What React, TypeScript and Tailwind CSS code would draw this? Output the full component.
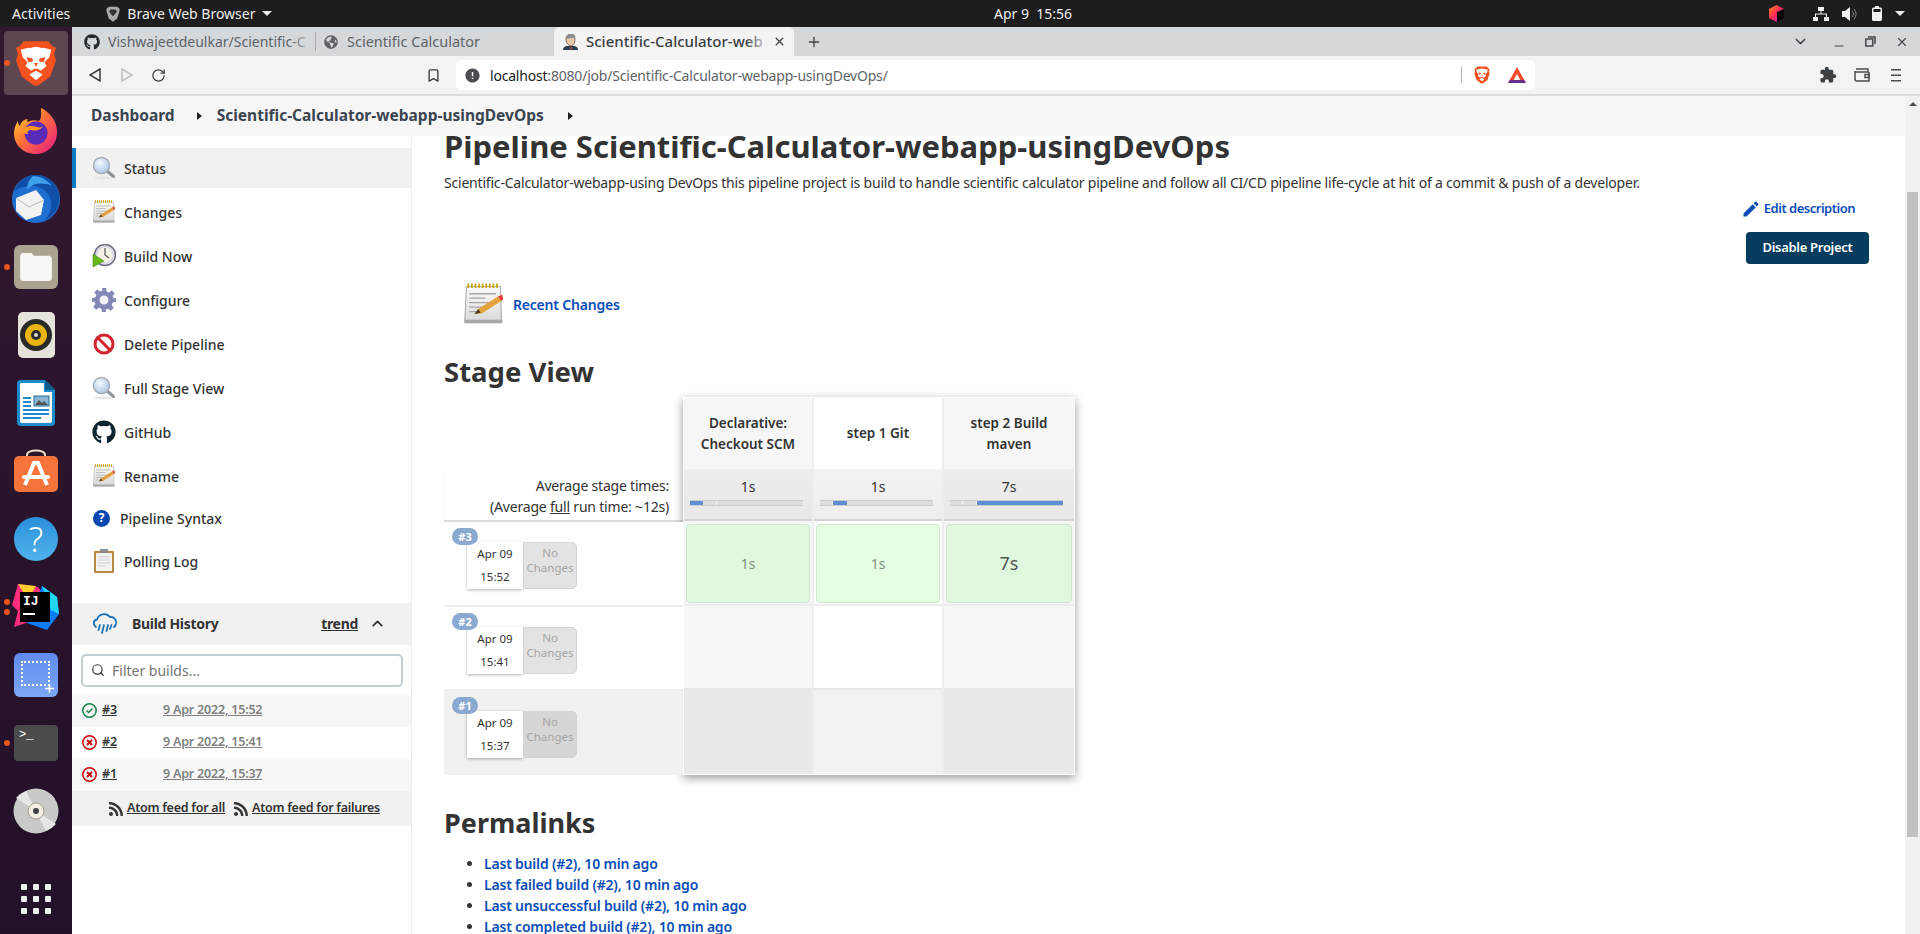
import { Bookmark, ChevronDown, ChevronUp, RotateCw, Search, X, Plus, Minus } from 'lucide-react';
import { FaGithub, FaGlobeAmericas, FaRss } from 'react-icons/fa';
import { MdEdit, MdError, MdExtension } from 'react-icons/md';

const font = { fontFamily: '"Noto Sans", sans-serif' };

function BraveLion({ size = 52 }: { size?: number }) {
  return (
    <svg width={size} height={size * 1.1} viewBox="0 0 44 48">
      <path d="M9 1h26l4 5 4 2-2 7 2 6-6 17-12 9-3 1-3-1-12-9L1 21l2-6-2-7 4-2z" fill="#f4511e" />
      <path d="M22 7c-3 0-5 2-8 1L6 10l2 8 5 5-2 4 6 5 3-2h4l3 2 6-5-2-4 5-5 2-8-8-2c-3 1-5-1-8-1z" fill="#fff" />
      <path d="M12 18l6 1 1 3-5 1zM32 18l-6 1-1 3 5 1z" fill="#f4511e" />
      <path d="M20 24h4l-2 4z" fill="#f4511e" />
      <path d="M15 36l7-4 7 4-7 6z" fill="#fff" />
    </svg>
  );
}

function Firefox() {
  return (
    <svg width="46" height="48" viewBox="0 0 46 48">
      <defs>
        <linearGradient id="ffa" x1="0" y1="0" x2="1" y2="1">
          <stop offset="0" stopColor="#ffe226" />
          <stop offset="0.45" stopColor="#ff7139" />
          <stop offset="1" stopColor="#e31587" />
        </linearGradient>
      </defs>
      <path d="M23 47C10 47 1 38 1 26c0-5 2-9 4-12 0 3 1 4 2 5 1-4 4-7 8-7-1 1-1 2 0 3 3-2 7-2 11-1 3-3 2-8 2-13 7 3 15 11 16 22 1 14-9 24-21 24z" fill="url(#ffa)" />
      <circle cx="23" cy="26" r="11.5" fill="#5b2ab8" />
      <path d="M9 24c3-5 9-6 15-4 3 1 5 0 6-1-3 5-8 5-12 4-3 0-4 2-3 4-4 0-5-1-6-3z" fill="#ff9a1f" />
    </svg>
  );
}

function Thunderbird() {
  return (
    <svg width="50" height="50" viewBox="0 0 50 50">
      <circle cx="25" cy="25" r="24" fill="#1f6fd0" />
      <path d="M3 18C6 8 15 1 25 1c12 0 23 9 23 23 0 10-6 19-14 22 5-6 8-13 5-22-3-8-10-12-18-12-8 0-15 2-18 6z" fill="#0f4fa8" />
      <path d="M5 24l20-8 8 10-3 15-15 5-10-9z" fill="#f2f2f2" />
      <path d="M5 24l13 9 15-7" fill="none" stroke="#b9b9c6" strokeWidth="1" />
      <path d="M22 2c8 0 14 4 19 10-6-3-13-3-19-1-2 1-5 3-6 5 0-6 2-10 6-14z" fill="#3ea2ec" />
    </svg>
  );
}

function Files() {
  return (
    <div className="w-[44px] h-[44px] rounded-[6px] bg-[#a9a38f] flex items-center justify-center">
      <svg width="32" height="28" viewBox="0 0 34 30">
        <path d="M3 0h9l3 3h16c1.500 0 3 1.500 3 3v21c0 1.500-1.500 3-3 3H3c-1.500 0-3-1.500-3-3V3c0-1.500 1.500-3 3-3z" fill="#f8f6f2" />
      </svg>
    </div>
  );
}

function Rhythmbox() {
  return (
    <div className="w-[37px] h-[46px] rounded-[5px] bg-[#e6e3da] flex items-center justify-center">
      <svg width="32" height="32" viewBox="0 0 32 32">
        <circle cx="16" cy="16" r="16" fill="#2a2a28" />
        <circle cx="16" cy="16" r="11" fill="#e9b512" />
        <circle cx="16" cy="16" r="5" fill="#2a2a28" />
        <circle cx="16" cy="16" r="2" fill="#d9d9d9" />
      </svg>
    </div>
  );
}

function Writer() {
  return (
    <svg width="38" height="46" viewBox="0 0 38 46">
      <path d="M4 0h24l10 10v32a4 4 0 0 1-4 4H4a4 4 0 0 1-4-4V4a4 4 0 0 1 4-4z" fill="#1e8bcd" />
      <path d="M4 3h23v9h8v29a2 2 0 0 1-2 2H5a2 2 0 0 1-2-2V4z" fill="#fff" />
      <path d="M28 0l10 10H28z" fill="#0e5f8e" />
      <path d="M6 17h8v2H6zM6 21h8v2H6zM6 25h8v2H6zM6 29h26v2H6zM6 33h26v2H6zM6 37h18v2H6z" fill="#1e8bcd" />
      <rect x="17" y="16" width="15" height="10" fill="#8ab7d4" stroke="#1e6f9e" />
      <path d="M18 25l4-5 3 3 2-2 4 4z" fill="#555" />
    </svg>
  );
}

function Store() {
  return (
    <svg width="46" height="44" viewBox="0 0 46 44">
      <path d="M14 10V6c0-6 18-6 18 0v4" fill="none" stroke="#eee3d0" strokeWidth="2" />
      <rect x="1" y="7" width="44" height="36" rx="5" fill="#f4743b" />
      <path d="M12 36l9-22h4l9 22" fill="none" stroke="#fff" strokeWidth="4" />
      <rect x="9" y="26" width="28" height="4" rx="2" fill="#fff" />
    </svg>
  );
}

function Help() {
  return (
    <div className="w-[44px] h-[44px] rounded-full bg-gradient-to-b from-[#2a8fdb] to-[#4fb3ec] flex items-center justify-center text-white text-[34px] font-light leading-none" style={font}>
      ?
    </div>
  );
}

function Idea() {
  return (
    <div className="relative w-[48px] h-[48px]">
      <svg width="48" height="48" viewBox="0 0 48 48" className="absolute left-0 top-0">
        <path d="M6 1l20 3 8 10-20 26-12 4 4-16-6-6z" fill="#fc2d7c" />
        <path d="M6 1l18 2-8 14z" fill="#ffcb2d" />
        <path d="M30 3l15 11 2 17-12 16-20-7z" fill="#087cfa" />
        <path d="M30 3l15 11 2 17-8-4z" fill="#21d7f7" />
      </svg>
      <div className="absolute left-[8px] top-[9px] w-[30px] h-[30px] bg-black text-white text-[13px] font-bold leading-[18px] pl-[3px] pt-[1px]" style={{ fontFamily: '"Liberation Mono", monospace' }}>
        IJ
        <div className="w-[12px] h-[2px] bg-white mt-[2px]" />
      </div>
    </div>
  );
}

function Screenshot() {
  return (
    <div className="relative w-[44px] h-[44px] rounded-[6px] bg-gradient-to-b from-[#5f8cf0] to-[#7ea6f8]">
      <div className="absolute left-[7px] top-[8px] w-[29px] h-[25px] border-2 border-dotted border-white" />
      <Plus className="absolute right-[2px] bottom-[2px] text-white" size={13} strokeWidth={3} />
    </div>
  );
}

function Terminal() {
  return (
    <div className="w-[44px] h-[36px] rounded-[4px] bg-[#4b4b4b] text-white text-[12px] leading-[14px] pl-[5px] pt-[3px]" style={{ fontFamily: '"Liberation Mono", monospace' }}>
      {'>_'}
    </div>
  );
}

function Disc() {
  return (
    <svg width="46" height="46" viewBox="0 0 46 46">
      <circle cx="23" cy="23" r="22.500" fill="#c9c9c9" />
      <path d="M23 23L3 10a23 23 0 0 1 10-7zM23 23l20 13a23 23 0 0 1-10 7z" fill="#e6e6e6" />
      <circle cx="23" cy="23" r="8" fill="#f3efe5" stroke="#a89f8d" />
      <circle cx="23" cy="23" r="3" fill="#444" />
    </svg>
  );
}

function Dock() {
  const slot = 'h-[68px] flex items-center justify-center relative';
  const dot = 'absolute left-[4px] w-[6px] h-[6px] rounded-full bg-[#e95420]';
  return (
    <div className="w-[72px] shrink-0 bg-gradient-to-b from-[#33182f] to-[#221028] flex flex-col pt-[2px]">
      <div className={slot}>
        <div className="w-[64px] h-[64px] rounded-[4px] bg-[#5d4650] flex items-center justify-center">
          <BraveLion size={42} />
        </div>
        <span className={`${dot} top-[31px]`} />
      </div>
      <div className={slot}><Firefox /></div>
      <div className={slot}><Thunderbird /></div>
      <div className={slot}><Files /><span className={`${dot} top-[31px]`} /></div>
      <div className={slot}><Rhythmbox /></div>
      <div className={slot}><Writer /></div>
      <div className={slot}><Store /></div>
      <div className={slot}><Help /></div>
      <div className={slot}>
        <Idea />
        <span className={`${dot} top-[26px]`} />
        <span className={`${dot} top-[36px]`} />
      </div>
      <div className={slot}><Screenshot /></div>
      <div className={slot}><Terminal /><span className={`${dot} top-[31px]`} /></div>
      <div className={slot}><Disc /></div>
      <div className="mt-[39px] grid grid-cols-3 gap-x-[6px] gap-y-[6px] w-[30px] mx-auto">
        {Array.from({ length: 9 }).map((_, i) => (
          <span key={i} className="w-[6px] h-[6px] rounded-[1px] bg-[#eeeeee]" />
        ))}
      </div>
    </div>
  );
}

function TopBar() {
  return (
    <div className="h-[27px] bg-[#1d1d1d] flex items-center text-[#ececec] text-[14px] relative" style={font}>
      <span className="ml-[12px]">Activities</span>
      <svg width="14" height="16" viewBox="0 0 44 48" className="ml-[36px]">
        <path d="M9 1h26l8 7-2 13-6 17-13 10-13-10L3 21 1 8z" fill="#aaa" />
        <path d="M13 10h18l3 7-6 8-6 6-6-6-6-8z" fill="#333" />
      </svg>
      <span className="ml-[7px]">Brave Web Browser</span>
      <span className="ml-[6px] w-0 h-0 border-x-[5px] border-x-transparent border-t-[5px] border-t-[#ececec]" />
      <span className="absolute left-[988px] w-[90px] text-center whitespace-pre">Apr 9  15:56</span>
      <div className="ml-auto flex items-center mr-[15px]">
        <svg width="15" height="17" viewBox="0 0 15 17">
          <defs>
            <linearGradient id="tbx" x1="0" y1="0" x2="1" y2="1">
              <stop offset="0" stopColor="#ff8a1e" />
              <stop offset="0.5" stopColor="#fe2857" />
              <stop offset="1" stopColor="#8a2be2" />
            </linearGradient>
          </defs>
          <path d="M7.500 0L15 4v9l-7.500 4L0 13V4z" fill="url(#tbx)" />
          <path d="M8 7l7-3v9l-7 4z" fill="#000" />
        </svg>
        <svg width="16" height="14" viewBox="0 0 16 14" className="ml-[29px]" fill="#f0f0f0">
          <rect x="5" y="0" width="6" height="4" />
          <rect x="0" y="10" width="5" height="4" />
          <rect x="11" y="10" width="5" height="4" />
          <path d="M7.500 4h1v2.500H14V10h-1V7.500H3V10H2V6.500h5.500z" />
        </svg>
        <svg width="15" height="14" viewBox="0 0 15 14" className="ml-[13px]">
          <path d="M0 4h3l5-4v14l-5-4H0z" fill="#f0f0f0" />
          <path d="M10 4a4 4 0 0 1 0 6M12 2a7 7 0 0 1 0 10" stroke="#888" fill="none" />
        </svg>
        <svg width="10" height="15" viewBox="0 0 10 15" className="ml-[15px]">
          <path d="M3 0h4v1.500h1.500c.8 0 1.500.7 1.500 1.500v10.500c0 .8-.7 1.500-1.500 1.500h-7C.7 15 0 14.300 0 13.500V3c0-.8.7-1.500 1.500-1.500H3z" fill="#f0f0f0" />
          <rect x="1.500" y="3" width="7" height="3" fill="#1d1d1d" />
        </svg>
        <span className="ml-[13px] w-0 h-0 border-x-[5px] border-x-transparent border-t-[5px] border-t-[#ececec]" />
      </div>
    </div>
  );
}

function JenkinsHead() {
  return (
    <svg width="15" height="16" viewBox="0 0 15 16">
      <path d="M0 16c0-3 2-4 4-4h7c2 0 4 1 4 4z" fill="#2c3e50" />
      <path d="M3 5c0-3 2-5 5-5s4 2 4 5-1 7-4 7-5-4-5-7z" fill="#e8c9a8" stroke="#4a3b30" strokeWidth="0.7" />
      <path d="M3 5c0-3 2-5 5-5s4 2 4 4C9 4 6 4 3 5z" fill="#8a8f94" />
      <path d="M6 14l2 1 2-1-2-1z" fill="#c0392b" />
    </svg>
  );
}

function TabStrip() {
  return (
    <div className="h-[29px] bg-[#d5d8db] flex items-stretch text-[14px]" style={font}>
      <div className="w-[243px] pl-[12px] flex items-center gap-[8px] text-[#5f6368] overflow-hidden relative">
        <FaGithub size={16} className="text-[#24292e] shrink-0" />
        <span className="whitespace-nowrap">Vishwajeetdeulkar/Scientific-C</span>
        <span className="absolute right-0 top-0 bottom-0 w-[24px] bg-gradient-to-r from-transparent to-[#d5d8db]" />
      </div>
      <div className="w-px my-[5px] bg-[#a9adb1]" />
      <div className="w-[238px] pl-[8px] flex items-center gap-[9px] text-[#5f6368]">
        <FaGlobeAmericas size={14} className="text-[#5f6368] shrink-0" />
        <span className="whitespace-nowrap text-[14.500px]">Scientific Calculator</span>
      </div>
      <div className="w-[240px] pl-[9px] rounded-t-[6px] bg-[#f3f3f3] flex items-center gap-[8px] text-[#3c4043] relative font-medium overflow-hidden text-[15px]">
        <span className="shrink-0"><JenkinsHead /></span>
        <span className="whitespace-nowrap">Scientific-Calculator-web</span>
        <span className="absolute right-[24px] top-0 bottom-0 w-[24px] bg-gradient-to-r from-transparent to-[#f3f3f3]" />
        <span className="absolute right-0 top-0 bottom-0 w-[24px] bg-[#f3f3f3] flex items-center">
          <X size={13} strokeWidth={2.500} className="text-[#45494d] ml-[3px]" />
        </span>
      </div>
      <div className="ml-[12px] flex items-center">
        <Plus size={16} strokeWidth={2} className="text-[#3c4043]" />
      </div>
      <div className="ml-auto flex items-center text-[#45494d]">
        <ChevronDown size={17} strokeWidth={2} />
        <Minus size={14} strokeWidth={2} className="ml-[23px] mt-[8px]" />
        <svg width="11" height="11" viewBox="0 0 11 11" className="ml-[19px]" fill="none" stroke="#45494d" strokeWidth="1.500">
          <rect x="0.800" y="3" width="7" height="7" />
          <path d="M3 1h7v7" />
        </svg>
        <X size={14} strokeWidth={2} className="ml-[19px] mr-[11px]" />
      </div>
    </div>
  );
}

function Toolbar() {
  return (
    <div className="h-[40px] bg-[#f3f3f3] border-b-2 border-[#dcdcdc] flex items-center relative" style={font}>
      <svg width="12" height="14" viewBox="0 0 12 14" className="ml-[17px]" fill="none" stroke="#3c4043" strokeWidth="1.500">
        <path d="M11 1L1 7l10 6z" />
      </svg>
      <svg width="12" height="14" viewBox="0 0 12 14" className="ml-[20px]" fill="none" stroke="#bdbdbd" strokeWidth="1.500">
        <path d="M1 1l10 6-10 6z" />
      </svg>
      <RotateCw size={15} strokeWidth={2} className="ml-[18px] text-[#3c4043]" />
      <Bookmark size={15} strokeWidth={2.200} className="ml-[260px] text-[#3c4043]" />
      <div className="ml-[15px] w-[1079px] h-[30px] bg-white rounded-[5px] flex items-center relative">
        <MdError size={17} className="ml-[8px] text-[#4a4d51]" />
        <span className="ml-[9px] text-[14px] tracking-[-0.2px] text-[#5f6368] whitespace-nowrap">
          <span className="text-[#202124]">localhost</span>:8080/job/Scientific-Calculator-webapp-usingDevOps/
        </span>
        <div className="ml-auto w-px h-[16px] bg-[#a9adb1]" />
        <div className="ml-[12px] flex items-center justify-center"><BraveLion size={16} /></div>
        <svg width="18" height="16" viewBox="0 0 18 16" className="ml-[18px] mr-[9px]">
          <path d="M9 0l9 16H0z" fill="#f3492d" />
          <path d="M4 16l5-9 5 9z" fill="#fff" />
          <path d="M0 16h18l-2-3H2z" fill="#662d91" />
        </svg>
      </div>
      <MdExtension size={18} className="ml-[284px] text-[#3c4043]" />
      <svg width="16" height="14" viewBox="0 0 16 14" className="ml-[17px]" fill="none" stroke="#4a4d51" strokeWidth="1.500">
        <path d="M2 1h12v3H2a1 1 0 0 1-1-1v8a2 2 0 0 0 2 2h12V4" />
        <rect x="11" y="6.500" width="4" height="3" />
      </svg>
      <svg width="10" height="13" viewBox="0 0 10 13" className="ml-[21px]" fill="#4a4d51">
        <rect width="10" height="1.500" />
        <rect y="5.500" width="10" height="1.500" />
        <rect y="11" width="10" height="1.500" />
      </svg>
    </div>
  );
}

function Lens({ size = 24 }: { size?: number }) {
  return (
    <svg width={size} height={size} viewBox="0 0 24 24">
      <defs>
        <radialGradient id="lens" cx="0.400" cy="0.350" r="0.700">
          <stop offset="0" stopColor="#f4f8fd" />
          <stop offset="1" stopColor="#a9c6e6" />
        </radialGradient>
      </defs>
      <ellipse cx="11" cy="22" rx="9" ry="1.500" fill="#e5e5e5" />
      <path d="M14.500 14.500l7 6" stroke="#8f9499" strokeWidth="3" strokeLinecap="round" />
      <circle cx="9.500" cy="9.500" r="8" fill="url(#lens)" stroke="#a8adb3" strokeWidth="1.500" />
    </svg>
  );
}

function Notepad({ size = 24 }: { size?: number }) {
  return (
    <svg width={size} height={size} viewBox="0 0 24 24">
      <defs>
        <linearGradient id="pad" x1="0" y1="0" x2="0" y2="1">
          <stop offset="0" stopColor="#fbfbfb" />
          <stop offset="1" stopColor="#d9d9d9" />
        </linearGradient>
      </defs>
      <path d="M2.500 2h19l.5 20H1.500z" fill="url(#pad)" stroke="#9a9a9a" strokeWidth="0.500" />
      <rect x="1.500" y="20.500" width="21" height="2" fill="#a8a8a8" />
      <path d="M3 1.500h18" stroke="#c9a80f" strokeWidth="2.500" strokeDasharray="1 1" />
      <path d="M4 6h15M4 8.500h9M4 11h12M4 13.500h7M4 16h8" stroke="#a8a8a8" strokeWidth="0.700" />
      <path d="M7 17.500l2-3 11-7 2 2.500-11 7z" fill="#e3a23c" />
      <path d="M20 7.500l2.500-1 .5 2.500-1 1z" fill="#e23b3b" />
      <path d="M7 17.500l2-3 1.500 2z" fill="#4a3b20" />
    </svg>
  );
}

function ClockPlay() {
  return (
    <svg width="24" height="24" viewBox="0 0 24 24">
      <circle cx="13" cy="11" r="10.500" fill="#dbdbe6" stroke="#6d6f86" strokeWidth="1.500" />
      <circle cx="13" cy="11" r="7.500" fill="#f7f3e4" />
      <path d="M13 4v7l4 3" stroke="#555" strokeWidth="1.200" fill="none" />
      <path d="M1 10l0 13 11-6z" fill="#69b81b" stroke="#3f7f0c" strokeWidth="0.500" />
    </svg>
  );
}

function GearIcon() {
  return (
    <svg width="24" height="24" viewBox="0 0 24 24">
      <path d="M10 0h4l.6 3.400 2.400 1 2.900-2 2.800 2.800-2 2.900 1 2.400L24 10v4l-3.300.6-1 2.400 2 2.900-2.800 2.800-2.900-2-2.400 1L14 24h-4l-.6-3.300-2.400-1-2.900 2-2.800-2.800 2-2.900-1-2.400L0 14v-4l3.300-.5 1-2.400-2-2.900 2.800-2.800 2.900 2 2.400-1z" fill="#8388b8" />
      <circle cx="12" cy="12" r="4.500" fill="#f3f3f7" />
    </svg>
  );
}

function NoEntry() {
  return (
    <svg width="22" height="22" viewBox="0 0 22 22">
      <circle cx="11" cy="11" r="9" fill="#fff" stroke="#d7232d" strokeWidth="3" />
      <path d="M4.500 4.500l13 13" stroke="#d7232d" strokeWidth="3" />
    </svg>
  );
}

function Clipboard() {
  return (
    <svg width="22" height="24" viewBox="0 0 22 24">
      <rect x="1" y="2" width="20" height="22" rx="1" fill="#b88a45" />
      <rect x="3" y="4" width="16" height="18" fill="#f2f2f2" />
      <rect x="7" y="0" width="8" height="4" rx="1" fill="#8b8b8b" />
      <path d="M5 8h12M5 11h12M5 14h12M5 17h8" stroke="#d0d0d0" />
    </svg>
  );
}

function RainCloud() {
  return (
    <svg width="26" height="24" viewBox="0 0 26 24" fill="none" stroke="#1a6fb5" strokeWidth="1.800" strokeLinecap="round">
      <path d="M4 15C1 13 1 8 5 7.500 6.500 2 14 0 18 5c4-.5 7 3 6 7-.3 1.200-1 2.200-2 3" />
      <path d="M8 13l-1.500 5M12 13l-2 8M16 13l-1.500 6M19.500 13l-1.500 4" />
    </svg>
  );
}

function MenuRow({ icon, label, active, className }: { icon: React.ReactNode; label: string; active?: boolean; className?: string }) {
  return (
    <div className={`h-[40px] flex items-center text-[14px] font-medium text-[#333] ${active ? 'bg-[#f1f1f1] border-l-4 border-[#0b7cc4] pl-[16px]' : 'pl-[20px]'} ${className ?? ''}`}>
      <span className="w-[24px] flex justify-center shrink-0">{icon}</span>
      <span className="ml-[8px]">{label}</span>
    </div>
  );
}

function BuildRow({ status, num, date, odd }: { status: 'ok' | 'fail'; num: string; date: string; odd?: boolean }) {
  return (
    <div className={`h-[32px] flex items-center pl-[10px] pb-[2px] text-[12.500px] tracking-[-0.2px] font-semibold ${odd ? 'bg-[#f7f7f7]' : 'bg-white'}`}>
      {status === 'ok' ? (
        <svg width="15" height="15" viewBox="0 0 15 15" fill="none" strokeWidth="1.500">
          <circle cx="7.500" cy="7.500" r="6.700" stroke="#138347" />
          <path d="M4.500 7.500l2 2 4-4" stroke="#138347" />
        </svg>
      ) : (
        <svg width="15" height="15" viewBox="0 0 15 15" fill="none" strokeWidth="1.500">
          <circle cx="7.500" cy="7.500" r="6.700" stroke="#cc0003" />
          <path d="M5 5l5 5M10 5l-5 5" stroke="#cc0003" strokeWidth="2" />
        </svg>
      )}
      <span className="ml-[5px] w-[61px] underline text-[#333]">{num}</span>
      <span className="underline text-[#808080]">{date}</span>
    </div>
  );
}

function Sidebar() {
  return (
    <div className="w-[340px] shrink-0 border-r border-[#eeeeee] pt-[12px]">
      <div className="flex flex-col gap-[4px]">
        <MenuRow active icon={<Lens />} label="Status" />
        <MenuRow icon={<Notepad />} label="Changes" />
        <MenuRow icon={<ClockPlay />} label="Build Now" />
        <MenuRow icon={<GearIcon />} label="Configure" />
        <MenuRow icon={<NoEntry />} label="Delete Pipeline" />
        <MenuRow icon={<Lens />} label="Full Stage View" />
        <MenuRow icon={<FaGithub size={24} className="text-[#0d2430]" />} label="GitHub" />
        <MenuRow icon={<Notepad />} label="Rename" />
      </div>
      <div className="h-[40px] mt-[2px] flex items-center pl-[21px] text-[14px] font-medium text-[#333]">
        <span className="w-[17px] h-[17px] rounded-full bg-[#0b47b0] text-white text-[12px] font-bold flex items-center justify-center">?</span>
        <span className="ml-[10px]">Pipeline Syntax</span>
      </div>
      <div className="h-[40px] mt-[3px] flex items-center pl-[20px] text-[14px] font-medium text-[#333]">
        <span className="w-[24px] flex justify-center"><Clipboard /></span>
        <span className="ml-[8px]">Polling Log</span>
      </div>
      <div className="h-[42px] mt-[22px] pb-[1px] bg-[#f1f1f1] flex items-center pl-[20px] text-[14px] tracking-[-0.3px] font-bold text-[#333]">
        <RainCloud />
        <span className="ml-[14px]">Build History</span>
        <span className="ml-auto underline">trend</span>
        <ChevronUp size={17} strokeWidth={2.500} className="ml-[11px] mr-[25px]" />
      </div>
      <div className="h-[50px] flex items-center pl-[9px]">
        <div className="w-[322px] h-[33px] bg-white border-2 border-[#c3ced4] rounded-[5px] flex items-center pl-[8px] text-[14px] text-[#757575]">
          <Search size={14} className="text-[#333]" />
          <span className="ml-[7px]">Filter builds...</span>
        </div>
      </div>
      <BuildRow odd status="ok" num="#3" date="9 Apr 2022, 15:52" />
      <BuildRow status="fail" num="#2" date="9 Apr 2022, 15:41" />
      <BuildRow odd status="fail" num="#1" date="9 Apr 2022, 15:37" />
      <div className="h-[35px] bg-[#f1f1f1] flex items-center justify-center gap-[8px] pl-[5px] text-[12.500px] tracking-[-0.25px] font-semibold text-[#333]">
        <span className="flex items-center gap-[3px]"><FaRss size={16} /><span className="underline">Atom feed for all</span></span>
        <span className="flex items-center gap-[3px]"><FaRss size={16} /><span className="underline">Atom feed for failures</span></span>
      </div>
    </div>
  );
}

type Stage = { name: string[]; avg: string; active: number; odd: boolean; value: string; big?: boolean; light?: boolean };

const stages: Stage[] = [
  { name: ['Declarative:', 'Checkout SCM'], avg: '1s', active: 0, odd: true, value: '1s' },
  { name: ['step 1 Git'], avg: '1s', active: 1, odd: false, value: '1s', light: true },
  { name: ['step 2 Build', 'maven'], avg: '7s', active: 2, odd: true, value: '7s', big: true },
];

const barSegments = ['w-[13px]', 'w-[14px]', 'flex-1'];

function StageColumn({ s, last }: { s: Stage; last?: boolean }) {
  return (
    <div className={`w-[130px] flex flex-col ${last ? '' : 'border-r-2 border-[#eeeeee]'}`}>
      <div className={`h-[71px] flex flex-col items-center justify-center text-[13.500px] font-semibold leading-[21px] text-[#333] ${s.odd ? 'bg-[#f6f6f6]' : 'bg-white'}`}>
        {s.name.map((n) => (
          <span key={n}>{n}</span>
        ))}
      </div>
      <div className={`h-[52px] pl-[6px] pt-[8px] flex flex-col items-center text-[14px] text-[#333] bg-gradient-to-b ${s.odd ? 'from-[#ededed] to-[#e8e8e8]' : 'from-[#f3f3f3] to-[#eeeeee]'} border-b-2 border-[#d4d4d4]`}>
        <span className="leading-[20px] pr-[6px]">{s.avg}</span>
        <div className="mt-[3px] w-[113px] h-[6px] self-start flex bg-[#dddddd] border-y border-[#cccccc]">
          {barSegments.map((w, i) => (
            <span key={w} className={`${w} h-full ${i === s.active ? 'bg-[#5c90d2]' : i < 2 ? 'border-r border-[#f2f2f2]' : ''}`} />
          ))}
        </div>
      </div>
      <div className={`h-[85px] px-[2px] pt-[3px] pb-[1px] border-b-2 border-[#eeeeee] ${s.odd ? 'bg-[#f6f6f6]' : 'bg-white'}`}>
        <div className={`h-full rounded-[4px] border border-[#cfe6cf] flex items-center justify-center ${s.light ? 'bg-[#e5ffe3]' : 'bg-[#dff8de]'} ${s.big ? 'text-[18px] text-[#555]' : 'text-[14px] text-[#7f917f]'}`}>
          {s.value}
        </div>
      </div>
      <div className={`h-[84px] border-b-2 border-[#e8e8e8] ${s.odd ? 'bg-[#f7f7f7]' : 'bg-white'}`} />
      <div className={`h-[84px] ${s.odd ? 'bg-[#e9e9e9]' : 'bg-[#f2f2f2]'}`} />
    </div>
  );
}

function BuildCell({ num, date, time, alt, last, tall }: { num: string; date: string; time: string; alt?: boolean; last?: boolean; tall?: boolean }) {
  return (
    <div className={`${tall ? 'h-[85px]' : 'h-[84px]'} relative pl-[23px] pt-[20px] ${alt ? 'bg-[#f1f1f1]' : 'bg-white'} ${last ? '' : 'border-b-2 border-[#eeeeee]'}`}>
      <span className="absolute left-[8px] top-[6px] w-[26px] h-[17px] rounded-full bg-[#8aa9d0] text-white text-[11px] font-bold text-center leading-[17px]">{num}</span>
      <div className="flex text-[11.500px]">
        <div className="w-[56px] h-[47px] bg-white shadow-[0_1px_3px_rgba(0,0,0,0.3)] flex flex-col items-center justify-between pt-[3px] pb-[4px] text-[#333]">
          <span>{date}</span>
          <span>{time}</span>
        </div>
        <div className={`w-[54px] h-[47px] rounded-r-[5px] ${alt ? 'bg-[#d6d6d6]' : 'bg-[#e3e3e3]'} border border-[#d4d4d4] flex flex-col items-center pt-[2px] leading-[15px] text-[#a5a5a5]`}>
          <span>No</span>
          <span>Changes</span>
        </div>
      </div>
    </div>
  );
}

function StageView() {
  return (
    <div className="flex items-start mt-[7px]">
      <div className="w-[239px] shrink-0 flex flex-col">
        <div className="h-[71px]" />
        <div className="h-[52px] pr-[14px] pt-[7px] text-right text-[14px] leading-[21px] text-[#333] tracking-[-0.2px] shadow-[0_2px_2px_rgba(0,0,0,0.08)]">
          <div>Average stage times:</div>
          <div>
            (Average <span className="underline">full</span> run time: ~12s)
          </div>
        </div>
        <div className="border-t-2 border-[#dddddd]">
          <BuildCell tall num="#3" date="Apr 09" time="15:52" />
          <BuildCell num="#2" date="Apr 09" time="15:41" />
          <BuildCell num="#1" date="Apr 09" time="15:37" alt last />
        </div>
      </div>
      <div className="flex shadow-[0_3px_9px_rgba(0,0,0,0.4)] p-[1px]">
        {stages.map((s, i) => (
          <StageColumn key={i} s={s} last={i === stages.length - 1} />
        ))}
      </div>
    </div>
  );
}

function Main() {
  return (
    <div className="flex-1 overflow-hidden pl-[32px] pr-[36px] text-[#333]">
      <h1 className="-mt-[10px] text-[31px] font-bold leading-[40px] whitespace-nowrap">Pipeline Scientific-Calculator-webapp-usingDevOps</h1>
      <p className="mt-[7px] text-[14px] tracking-[-0.2px] leading-[20px] whitespace-nowrap">
        Scientific-Calculator-webapp-using DevOps this pipeline project is build to handle scientific calculator pipeline and follow all CI/CD pipeline life-cycle at hit of a commit &amp; push of a developer.
      </p>
      <div className="mt-[6px] flex flex-col items-end">
        <div className="flex items-center text-[13px] tracking-[-0.5px] font-semibold text-[#0b4db8] mr-[14px] h-[20px]">
          <MdEdit size={20} />
          <span className="ml-[3px]">Edit description</span>
        </div>
        <div className="mt-[13px] w-[123px] h-[32px] rounded-[4px] bg-[#063c5e] text-white text-[13px] tracking-[-0.3px] font-semibold flex items-center justify-center">Disable Project</div>
      </div>
      <div className="mt-[19px] ml-[18px] flex items-center">
        <Notepad size={43} />
        <span className="ml-[8px] text-[14px] tracking-[-0.2px] font-semibold text-[#0b4db8]">Recent Changes</span>
      </div>
      <h2 className="mt-[28px] text-[27.500px] font-bold leading-[36px] text-[#333]">Stage View</h2>
      <StageView />
      <h2 className="mt-[30px] text-[27px] font-bold leading-[36px] text-[#333]">Permalinks</h2>
      <ul className="mt-[12px] pl-[40px] list-disc text-[14px] tracking-[-0.2px] font-semibold leading-[21px] text-[#0b4db8] marker:text-[#333]">
        <li>Last build (#2), 10 min ago</li>
        <li>Last failed build (#2), 10 min ago</li>
        <li>Last unsuccessful build (#2), 10 min ago</li>
        <li>Last completed build (#2), 10 min ago</li>
      </ul>
    </div>
  );
}

export default function App() {
  return (
    <div className="w-[1920px] h-[934px] overflow-hidden flex flex-col bg-white" style={font}>
      <TopBar />
      <div className="flex-1 flex min-h-0">
        <Dock />
        <div className="flex-1 flex flex-col min-w-0">
          <TabStrip />
          <Toolbar />
          <div className="flex-1 flex min-h-0">
            <div className="flex-1 flex flex-col min-w-0">
              <div className="h-[40px] shrink-0 bg-[#f6f6f6] flex items-center pl-[19px] text-[15.500px] font-bold text-[#3a4550] relative z-10">
                <span>Dashboard</span>
                <span className="ml-[22px] w-0 h-0 border-y-[4px] border-y-transparent border-l-[5px] border-l-[#222]" />
                <span className="ml-[15px]">Scientific-Calculator-webapp-usingDevOps</span>
                <span className="ml-[24px] w-0 h-0 border-y-[4px] border-y-transparent border-l-[5px] border-l-[#222]" />
              </div>
              <div className="flex-1 flex min-h-0">
                <Sidebar />
                <Main />
              </div>
            </div>
            <div className="w-[15px] shrink-0 bg-[#f1f1f1] flex flex-col items-center">
              <span className="mt-[6px] w-0 h-0 border-x-[4px] border-x-transparent border-b-[4px] border-b-[#505050]" />
              <div className="mt-[86px] w-[11px] h-[645px] bg-[#c1c1c1]" />
            </div>
          </div>
        </div>
      </div>
    </div>
  );
}
